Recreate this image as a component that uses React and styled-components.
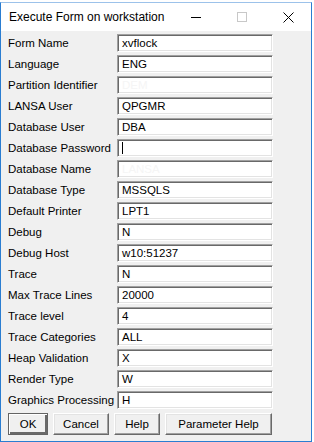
import React from 'react';
import styled, { createGlobalStyle } from 'styled-components';

const GlobalStyle = createGlobalStyle`
  html, body {
    margin: 0;
    padding: 0;
    background: #ffffff;
  }
  body {
    font-family: "Liberation Sans", Arial, sans-serif;
  }
`;

const Window = styled.div`
  margin-top: 2px;
  width: 312px;
  height: 440px;
  box-sizing: border-box;
  border: 1px solid #2a7dd1;
  border-top-color: #9cc2ea;
  background: #f0f0f0;
  display: flex;
  flex-direction: column;
`;

const TitleBar = styled.div`
  height: 28px;
  background: #ffffff;
  display: flex;
  align-items: center;
  padding-left: 8px;
`;

const Title = styled.div`
  flex: 1;
  font-size: 12px;
  color: #000;
  padding-bottom: 1px;
`;

const CaptionButton = styled.div`
  width: 46px;
  height: 28px;
  display: flex;
  align-items: center;
  justify-content: center;
`;

const Body = styled.div`
  padding: 3px 0 0 7px;
  display: flex;
  flex-direction: column;
`;

const Row = styled.div`
  display: grid;
  grid-template-columns: 109px 156px;
  align-items: center;
  height: 18px;
  margin-bottom: 3px;
`;

const Label = styled.div`
  font-size: 11.5px;
  color: #000;
  white-space: nowrap;
`;

const Field = styled.div`
  position: relative;
  height: 18px;
  box-sizing: border-box;
  background: #fff;
  border-top: 1px solid #a0a0a0;
  border-left: 1px solid #a0a0a0;
  border-bottom: 1px solid #ffffff;
  border-right: 1px solid #ffffff;
  box-shadow: inset 1px 1px 0 #696969, inset -1px -1px 0 #e3e3e3;
  font-size: 11.5px;
  line-height: 16px;
  padding-left: 4px;
  color: ${p => (p.$faint ? '#f5f5f5' : '#000')};
  white-space: nowrap;
  overflow: hidden;
`;

const Caret = styled.span`
  position: absolute;
  left: 4px;
  top: 2px;
  width: 1px;
  height: 12px;
  background: #000;
`;

const ButtonRow = styled.div`
  display: flex;
  gap: 5px;
  margin-top: 1px;
`;

const Button = styled.div`
  height: 22px;
  width: ${p => p.$w}px;
  box-sizing: border-box;
  background: #f0f0f0;
  font-size: 11.5px;
  display: flex;
  align-items: center;
  justify-content: center;
  color: #000;
  border-top: 1px solid ${p => (p.$default ? '#646464' : '#ffffff')};
  border-left: 1px solid ${p => (p.$default ? '#646464' : '#ffffff')};
  border-bottom: 1px solid ${p => (p.$default ? '#646464' : '#696969')};
  border-right: 1px solid ${p => (p.$default ? '#646464' : '#696969')};
  box-shadow: ${p =>
    p.$default
      ? 'inset 1px 1px 0 #ffffff, inset -2px -2px 0 #696969'
      : 'inset -1px -1px 0 #a0a0a0, inset 1px 1px 0 #e3e3e3'};
`;

const fields = [
  ['Form Name', 'xvflock'],
  ['Language', 'ENG'],
  ['Partition Identifier', 'DEM', 'faint'],
  ['LANSA User', 'QPGMR'],
  ['Database User', 'DBA'],
  ['Database Password', '', 'caret'],
  ['Database Name', 'LANSA', 'faint'],
  ['Database Type', 'MSSQLS'],
  ['Default Printer', 'LPT1'],
  ['Debug', 'N'],
  ['Debug Host', 'w10:51237'],
  ['Trace', 'N'],
  ['Max Trace Lines', '20000'],
  ['Trace level', '4'],
  ['Trace Categories', 'ALL'],
  ['Heap Validation', 'X'],
  ['Render Type', 'W'],
  ['Graphics Processing', 'H'],
];

const App = () => {
  return (
    <>
      <GlobalStyle />
      <Window>
        <TitleBar>
          <Title>Execute Form on workstation</Title>
          <CaptionButton>
            <svg width="10" height="10" viewBox="0 0 10 10">
              <path d="M0 5.5H10" stroke="#000" strokeWidth="1" />
            </svg>
          </CaptionButton>
          <CaptionButton>
            <svg width="10" height="10" viewBox="0 0 10 10">
              <rect x="0.5" y="0.5" width="9" height="9" fill="none" stroke="#c8c8c8" />
            </svg>
          </CaptionButton>
          <CaptionButton>
            <svg width="11" height="11" viewBox="0 0 11 11">
              <path d="M0.5 0.5L10.5 10.5M10.5 0.5L0.5 10.5" stroke="#000" strokeWidth="1" />
            </svg>
          </CaptionButton>
        </TitleBar>
        <Body>
          {fields.map(([label, value, kind]) => (
            <Row key={label}>
              <Label>{label}</Label>
              <Field $faint={kind === 'faint'}>
                {value}
                {kind === 'caret' && <Caret />}
              </Field>
            </Row>
          ))}
          <ButtonRow>
            <Button $w={40} $default>OK</Button>
            <Button $w={56}>Cancel</Button>
            <Button $w={46}>Help</Button>
            <Button $w={107}>Parameter Help</Button>
          </ButtonRow>
        </Body>
      </Window>
    </>
  );
};

export default App;
